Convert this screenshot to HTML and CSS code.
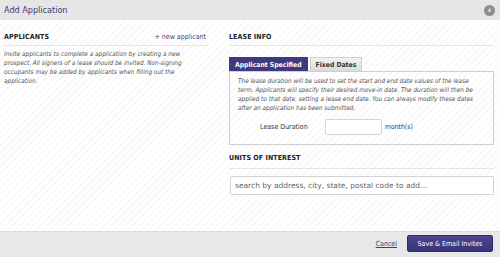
FILE: index.html
```html
<!DOCTYPE html>
<html>
<head>
<meta charset="utf-8">
<link rel="stylesheet" href="styles.css">
</head>
<body>
<div class="modal">
  <header class="hd">
    <h1 class="title">Add Application</h1>
    <span class="close">x</span>
  </header>
  <main class="bd">
    <section class="col col-left">
      <div class="sec-hd">
        <h2 class="sec-title">APPLICANTS</h2>
        <a class="link-add" href="#">+ new applicant</a>
      </div>
      <p class="help">Invite applicants to complete a application by creating a new prospect. All signers of a lease should be invited. Non-signing occupants may be added by applicants when filling out the application.</p>
    </section>
    <section class="col col-right">
      <div class="sec-hd">
        <h2 class="sec-title">LEASE INFO</h2>
      </div>
      <div class="tabs">
        <span class="tab tab-active">Applicant Specified</span>
        <span class="tab">Fixed Dates</span>
      </div>
      <div class="tabbox">
        <p class="help">The lease duration will be used to set the start and end date values of the lease term. Applicants will specify their desired move-in date. The duration will then be applied to that date, setting a lease end date. You can always modify these dates after an application has been submitted.</p>
        <div class="dur">
          <label class="dur-label">Lease Duration</label>
          <input class="dur-input" type="text">
          <span class="dur-unit">month(s)</span>
        </div>
      </div>
      <div class="sec-hd sec-units">
        <h2 class="sec-title">UNITS OF INTEREST</h2>
      </div>
      <input class="search" type="text" placeholder="search by address, city, state, postal code to add...">
    </section>
  </main>
  <footer class="ft">
    <a class="cancel" href="#">Cancel</a>
    <button class="btn-save">Save &amp; Email Invites</button>
  </footer>
</div>
</body>
</html>
```

FILE: styles.css
```css
* { box-sizing: border-box; }
html, body { margin: 0; padding: 0; }
body {
  width: 500px;
  height: 257px;
  overflow: hidden;
  font-family: "DejaVu Sans Condensed", "DejaVu Sans", sans-serif;
  font-stretch: condensed;
  color: #333;
}
.modal {
  display: flex;
  flex-direction: column;
  height: 257px;
}
.hd {
  height: 20px;
  background: #e6e6e6;
  display: flex;
  align-items: center;
  justify-content: space-between;
  padding: 0 5px 0 4px;
}
.title {
  margin: 0;
  font-size: 9px;
  font-weight: normal;
  color: #3b3977;
}
.close {
  width: 11px;
  height: 11px;
  border-radius: 50%;
  background: #8d8d8d;
  color: #e8e8e8;
  font-size: 6px;
  font-weight: bold;
  display: flex;
  align-items: center;
  justify-content: center;
  line-height: 1;
}
.bd {
  flex: 1;
  display: flex;
  gap: 21px;
  padding: 13px 6px 0 4px;
  background-color: #fff;
  background-image: repeating-linear-gradient(135deg, #fff 0px, #fff 3px, #f9f9f9 3px, #f9f9f9 5px);
}
.col-left { width: 204px; }
.col-right { flex: 1; }
.sec-hd {
  display: flex;
  justify-content: space-between;
  align-items: baseline;
  border-bottom: 1px solid #e6e6e6;
  padding-bottom: 4px;
}
.sec-title {
  margin: 0;
  font-size: 7px;
  font-weight: bold;
  color: #222;
  letter-spacing: 0.1px;
}
.link-add {
  font-size: 7px;
  color: #3b3a86;
  text-decoration: none;
  margin-right: 2px;
}
.help {
  margin: 0;
  font-size: 6.4px;
  font-style: italic;
  line-height: 9px;
  color: #555;
}
.col-left .help { margin-top: 4px; }
.tabs {
  display: flex;
  gap: 2px;
  margin-top: 11px;
}
.tab {
  font-size: 6.8px;
  font-weight: bold;
  padding: 3px 5px 3px;
  height: 14px;
  line-height: 8px;
  background: linear-gradient(#f2f2f2, #dadada);
  color: #333;
  border: 1px solid #cfcfcf;
  border-bottom: none;
}
.tab-active {
  background: #3d3a80;
  color: #fff;
  border-color: #3d3a80;
}
.tabbox {
  border: 1px solid #cfcfcf;
  padding: 5px 8px 9px 8px;
  background: transparent;
}
.dur {
  display: flex;
  align-items: center;
  margin-top: 6px;
  padding-left: 22px;
}
.dur-label {
  font-size: 7px;
  color: #333;
  width: 65px;
}
.dur-input {
  width: 57px;
  height: 16px;
  border: 1px solid #d6d6d6;
  border-radius: 2px;
  background: #fff;
  margin: 0;
}
.dur-unit {
  font-size: 6.8px;
  margin-left: 3px;
  color: #333;
}
.sec-units { margin-top: 9px; padding-bottom: 6px; }
.search {
  display: block;
  width: 264px;
  height: 19px;
  margin-top: 7px;
  margin-left: 1px;
  border: 1px solid #d2d2d2;
  border-radius: 2px;
  padding: 0 4px;
  font-family: "DejaVu Sans", sans-serif;
  font-size: 7.5px;
  color: #555;
  background: #fff;
}
.search::placeholder { color: #666; }
.ft {
  height: 26px;
  background: #e8e8e8;
  border-top: 1px solid #dcdcdc;
  display: flex;
  align-items: center;
  justify-content: flex-end;
  gap: 10px;
  padding: 0 7px 2px 0;
}
.cancel {
  font-size: 7px;
  color: #3b3a86;
  text-decoration: underline;
}
.btn-save {
  width: 86px;
  height: 17px;
  border: 1px solid #2f2c6a;
  border-radius: 2px;
  background: linear-gradient(#4a4790, #37347a);
  color: #fff;
  font-family: "DejaVu Sans Condensed", "DejaVu Sans", sans-serif;
  font-stretch: condensed;
  font-size: 7px;
  padding: 0;
}
```
